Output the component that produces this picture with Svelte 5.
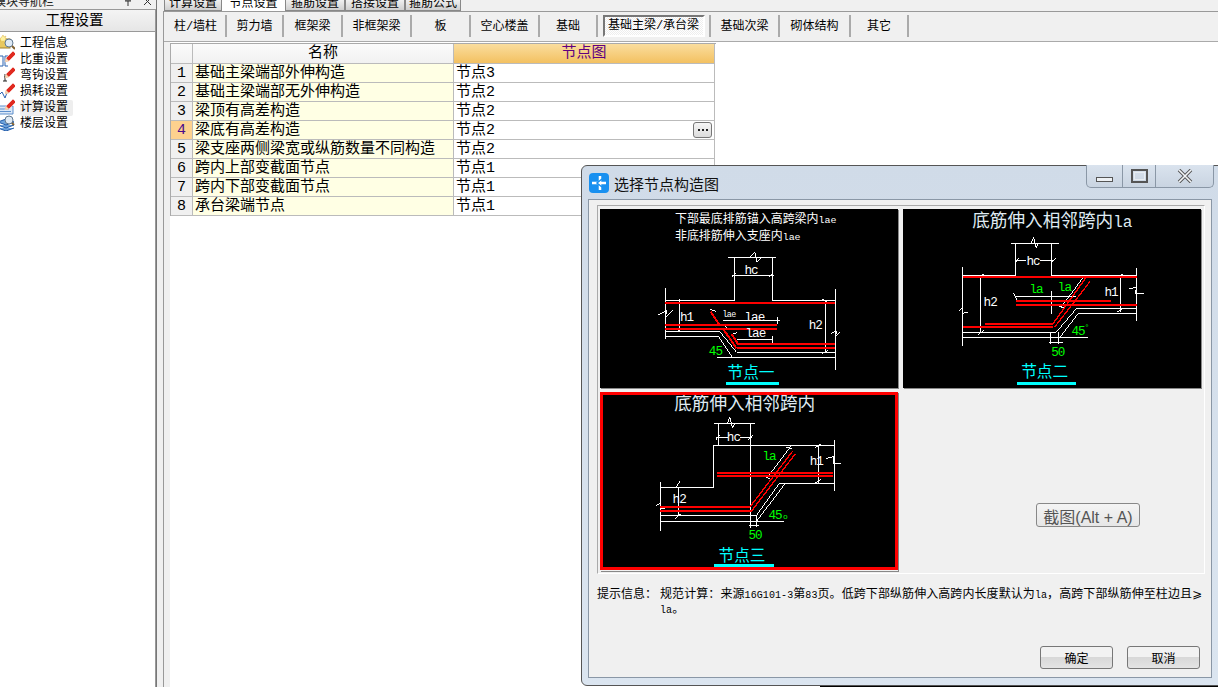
<script lang="ts">
    const topTabs = [
        { label: "计算设置", w: 58 },
        { label: "节点设置", w: 63, active: true },
        { label: "箍筋设置", w: 60 },
        { label: "搭接设置", w: 60 },
        { label: "箍筋公式", w: 56 },
    ];
    const tools = [
        { label: "柱/墙柱", w: 61 },
        { label: "剪力墙", w: 57 },
        { label: "框架梁", w: 59 },
        { label: "非框架梁", w: 69 },
        { label: "板", w: 59 },
        { label: "空心楼盖", w: 69 },
        { label: "基础", w: 58 },
        { label: "基础主梁/承台梁", w: 113, active: true },
        { label: "基础次梁", w: 69 },
        { label: "砌体结构", w: 71 },
        { label: "其它", w: 58 },
    ];
    const navItems = [
        { label: "工程信息", icon: "info" },
        { label: "比重设置", icon: "weight" },
        { label: "弯钩设置", icon: "hook" },
        { label: "损耗设置", icon: "loss" },
        { label: "计算设置", icon: "calc", selected: true },
        { label: "楼层设置", icon: "floor" },
    ];
    const rows = [
        { name: "基础主梁端部外伸构造", value: "节点3" },
        { name: "基础主梁端部无外伸构造", value: "节点2" },
        { name: "梁顶有高差构造", value: "节点2" },
        { name: "梁底有高差构造", value: "节点2", current: true },
        { name: "梁支座两侧梁宽或纵筋数量不同构造", value: "节点2" },
        { name: "跨内上部变截面节点", value: "节点1" },
        { name: "跨内下部变截面节点", value: "节点1" },
        { name: "承台梁端节点", value: "节点1" },
    ];
</script>

<div class="page">
    <aside class="sidebar">
        <div class="nav-caption">
            <span>模块导航栏</span>
            <span class="caption-btns">
                <svg width="10" height="9" viewBox="0 0 10 9"><path d="M5 0v8M2 3h6M3 0v3M7 0v3" stroke="#333" fill="none" /></svg>
                <svg width="9" height="9" viewBox="0 0 9 9"><path d="M1 0l7 7M8 0l-7 7" stroke="#333" fill="none" /></svg>
            </span>
        </div>
        <div class="nav-title">工程设置</div>
        <ul class="nav-list">
            {#each navItems as item}
                <li>
                    <svg class="nav-icon" width="16" height="16" viewBox="0 0 16 16">
                        {#if item.icon === "info"}
                            <rect x="-1" y="4" width="12" height="9" fill="#e8c860" stroke="#a08030" />
                            <path d="M4 0l1 2 2-1-1 2 2 1-2 1 0 2-2-1-2 1 0-2-2-1 2-1z" fill="#fff2a0" stroke="#d8b040" stroke-width=".5" />
                            <circle cx="10" cy="8" r="4" fill="#dfeaf5" stroke="#607890" />
                            <path d="M13 11l3 3" stroke="#806030" stroke-width="2" />
                        {:else if item.icon === "floor"}
                            <path d="M-1 7l8-3 8 3-8 3zM-1 10l8 3 8-3M-1 13l8 3 8-3" fill="#6fa4dc" stroke="#1f5aa8" />
                            <circle cx="10" cy="5" r="4" fill="#dfeaf5" stroke="#607890" />
                            <path d="M13 8l2 2" stroke="#806030" stroke-width="2" />
                        {:else}
                            {#if item.icon === "weight"}
                                <path d="M0 5h4v10H0M9 5H6v10h3" fill="none" stroke="#2a62b0" />
                            {:else if item.icon === "hook"}
                                <path d="M6 7v7M4 14h4M5 10h2" fill="none" stroke="#222" />
                            {:else if item.icon === "loss"}
                                <path d="M0 12l3-3 3 6 3-8" fill="none" stroke="#2a62b0" />
                            {:else}
                                <path d="M-1 7h15v8H-1z" fill="#dbe8f7" stroke="#5d8fcc" />
                                <path d="M1 10h9M1 12.500h11" stroke="#5d8fcc" />
                            {/if}
                            <path d="M6 11l1-4 7-7 3 3-7 7z" fill="#e02a20" stroke="#fff" stroke-width=".5" />
                            <path d="M6 11l1-4 3 3z" fill="#f0d8b0" />
                        {/if}
                    </svg>
                    <span class="nav-label" class:selected={item.selected}>{item.label}</span>
                </li>
            {/each}
        </ul>
    </aside>

    <main class="main">
        <nav class="top-tabs">
            {#each topTabs as tab}
                <span class="top-tab" class:active={tab.active} style="width:{tab.w}px">{tab.label}</span>
            {/each}
        </nav>
        <div class="sheet">
            <div class="toolbar">
                {#each tools as tool}
                    <div class="tool" style="width:{tool.w}px">
                        <span class="tool-text" class:active={tool.active}>{tool.label}</span>
                    </div>
                {/each}
            </div>
            <div class="table-wrap">
                <div class="table">
                    <div class="cell head corner"></div>
                    <div class="cell head">名称</div>
                    <div class="cell head picked">节点图</div>
                    {#each rows as row, i}
                        <div class="cell num" class:current={row.current}>{i + 1}</div>
                        <div class="cell name">{row.name}</div>
                        <div class="cell value">
                            {row.value}
                            {#if row.current}
                                <button class="more">
                                    <svg width="10" height="3" viewBox="0 0 10 3"><path d="M0 0h2v2H0zM4 0h2v2H4zM8 0h2v2H8z" fill="#222" /></svg>
                                </button>
                            {/if}
                        </div>
                    {/each}
                </div>
            </div>
        </div>
    </main>

    <section class="dialog">
        <header class="dlg-title">
            <span class="dlg-logo">
                <svg width="20" height="20" viewBox="0 0 20 20">
                    <rect width="20" height="20" rx="4" fill="#1890f0" />
                    <path d="M3 10h14M11 3v14" stroke="#fff" stroke-width="2.500" fill="none" />
                    <path d="M13 6l-5 4 5 4" stroke="#1890f0" stroke-width="1.500" fill="none" />
                </svg>
            </span>
            <span class="dlg-name">选择节点构造图</span>
            <div class="win-btns">
                <span class="win-btn min"><i></i></span>
                <span class="win-btn max"><i></i></span>
                <span class="win-btn close">
                    <svg width="16" height="14" viewBox="0 0 16 14"><path d="M2 1l12 12M14 1L2 13" stroke="#555" stroke-width="3.500" /><path d="M2 1l12 12M14 1L2 13" stroke="#f4f6f8" stroke-width="1.600" /></svg>
                </span>
            </div>
        </header>
        <div class="dlg-body">
            <div class="gallery">
                <div class="drawing">
                    <svg width="298" height="179" viewBox="60 145 895 537" class="cad">
                        <rect x="60" y="145" width="895" height="537" fill="#000" />
                        <text x="285" y="188" class="note">下部最底排筋锚入高跨梁内<tspan class="mono">lae</tspan></text>
                        <text x="285" y="238" class="note">非底排筋伸入支座内<tspan class="mono">lae</tspan></text>
                        <path class="w" d="M445 289H590M510 289L525 275L532 305L545 289M463 289V421M577 289V421M256 421H463M577 421H765M256 381V535M766 385V628M456 343H582M456 350L470 336M568 350L582 336M299 415V515M288 515L304 503M737 421V578M727 415L745 427M727 578L745 570" />
                        <path class="w" d="M235 462L260 450L256 470L278 450M755 518L770 510L768 528L780 515M430 481H600M470 537H580M594 470V490M578 527V548M256 513H420L470 575H765M256 527H415L458 590M411 590H765M390 446L408 452M428 490L440 500M455 522L470 516" />
                        <path class="r t" d="M256 427H765M256 494H593M256 504H593M475 551H765M470 563H765" />
                        <path class="r" d="M392 453L418 492M430 505L470 563M455 520L475 551" stroke-width="6" />
                        <text x="300" y="480" class="lbl">h1</text>
                        <text x="687" y="505" class="lbl">h2</text>
                        <text x="494" y="339" class="lbl">hc</text>
                        <text x="428" y="468" class="lbl n">lae</text>
                        <text x="494" y="480" class="lbl">lae</text>
                        <text x="497" y="530" class="lbl">lae</text>
                        <text x="387" y="582" class="lbl g">45</text>
                        <text x="443" y="652" class="cap">节点一</text>
                        <rect x="438" y="663" width="159" height="9" fill="#00ffff" />
                    </svg>
                </div>
                <div class="drawing">
                    <svg width="298" height="179" viewBox="10 145 895 537" class="cad">
                        <rect x="10" y="145" width="895" height="537" fill="#000" />
                        <text x="218" y="200" class="big">底筋伸入相邻跨内<tspan class="mono">la</tspan></text>
                        <path class="w" d="M333 247H480M395 247L402 230L410 262L417 247M349 247V343M455 247V343M190 343H349M455 343H712M190 320V556M712 322V482M345 300H380M422 300H465M345 308L358 292M455 308L468 292M244 343V515M234 352L252 340M234 522L252 510M662 343V455M652 352L670 340M652 455L670 443" />
                        <path class="w" d="M455 390V460M190 515H470L530 445H712M190 532H565M480 532L535 460H712M345 408H530M342 398L352 418M555 345L485 440M478 436L498 444M545 345L562 352M453 515V550M478 515V550M448 545H490M690 385L712 378L708 397L735 400M178 450L190 442L190 458L204 455" />
                        <path class="r t" d="M190 350H712M348 422H635M348 434H712M190 500H460M256 490H460" />
                        <path class="r" d="M460 490L560 350M465 500L572 362" stroke-width="4" />
                        <text x="381" y="314" class="lbl">hc</text>
                        <text x="252" y="435" class="lbl">h2</text>
                        <text x="615" y="407" class="lbl">h1</text>
                        <text x="390" y="398" class="lbl g">la</text>
                        <text x="475" y="390" class="lbl g">la</text>
                        <text x="516" y="523" class="lbl g">45</text>
                        <text x="555" y="508" class="lbl g sm">°</text>
                        <text x="455" y="586" class="lbl g">50</text>
                        <text x="365" y="650" class="cap">节点二</text>
                        <rect x="351" y="663" width="180" height="9" fill="#00ffff" />
                    </svg>
                </div>
                <div class="drawing">
                    <svg width="298" height="178" viewBox="12 12 895 534" class="cad">
                        <rect x="12" y="12" width="895" height="534" fill="#000" />
                        <text x="235" y="65" class="big">底筋伸入相邻跨内</text>
                        <path class="w" d="M355 105H477M395 105L402 88L410 120L417 105M367 105V172M463 105V420M352 172H715M352 172V300H193M193 282V430M715 155V310M360 147H395M432 147H470M360 155L372 140M458 155L472 140M667 172V285M657 180L675 168M657 285L675 275M247 300V385M240 298L254 278M238 392L254 378" />
                        <path class="w" d="M193 382H482L550 287H715M193 400H565M482 400L568 287H715M515 268L585 175M505 264L522 272M572 178L590 182M460 412H490M463 400V418M482 382V418M690 212L715 205L712 225L736 226M180 352L193 347L193 360L207 362" />
                        <path class="r t" d="M363 254H712M363 264H712M193 356H463M193 368H468" />
                        <path class="r" d="M463 356L590 190M468 368L598 198" stroke-width="4" />
                        <text x="393" y="160" class="lbl">hc</text>
                        <text x="230" y="345" class="lbl">h2</text>
                        <text x="642" y="230" class="lbl">h1</text>
                        <text x="500" y="216" class="lbl g">la</text>
                        <text x="518" y="393" class="lbl g">45</text>
                        <text x="562" y="393" class="lbl g sm">o</text>
                        <text x="458" y="452" class="lbl g">50</text>
                        <text x="368" y="518" class="cap">节点三</text>
                        <rect x="354" y="528" width="180" height="9" fill="#00ffff" />
                        <rect x="16.500" y="16.500" width="886" height="525" fill="none" stroke="#ff0000" stroke-width="9" />
                    </svg>
                </div>
                <div class="shot-cell">
                    <button class="shot-btn">截图(Alt + A)</button>
                </div>
            </div>
            <div class="hint">
                <span class="hint-label">提示信息：</span>
                <p>规范计算：来源<span class="lat">16G101-3</span>第<span class="lat">83</span>页。低跨下部纵筋伸入高跨内长度默认为<span class="lat">la</span>，高跨下部纵筋伸至柱边且<span class="ge">⩾</span><br /><span class="lat">la</span>。</p>
            </div>
            <div class="actions">
                <button class="dlg-btn">确定</button>
                <button class="dlg-btn">取消</button>
            </div>
        </div>
    </section>
    <div class="behind"></div>
</div>

<style>
    :global(body) {
        margin: 0;
        background: #fff;
    }

    .page {
        position: relative;
        width: 1218px;
        height: 687px;
        overflow: hidden;
        display: flex;
        font-family: "Liberation Mono", "Noto Sans CJK SC", monospace;
        font-size: 12px;
        color: #000;
        background: #f0f0f0;
    }

    .sidebar {
        width: 156px;
        display: flex;
        flex-direction: column;
        border-right: 1px solid #777;
        flex-shrink: 0;
    }

    .nav-caption {
        height: 9px;
        line-height: 7px;
        margin-left: -6px;
        display: flex;
        justify-content: space-between;
        color: #222;
        overflow: hidden;
    }

    .caption-btns {
        display: flex;
        gap: 10px;
        padding-right: 4px;
        margin-top: -2px;
    }

    .nav-title {
        height: 21px;
        line-height: 23px;
        padding-right: 6px;
        text-align: center;
        font-size: 14.500px;
        border: 1px solid #999;
        border-left: none;
        background: linear-gradient(#f4f4f4, #e6e6e6);
    }

    .nav-list {
        flex: 1;
        margin: 0;
        padding: 4px 0 0;
        list-style: none;
        background: #fff;
        border-right: 1px solid #999;
    }

    .nav-list li {
        height: 16px;
        display: flex;
        align-items: center;
    }

    .nav-icon {
        margin: -3px 5px 0 -1px;
        flex-shrink: 0;
        overflow: hidden;
    }

    .nav-label {
        line-height: 16px;
        padding-right: 5px;
        border-radius: 2px;
    }

    .nav-label.selected {
        background: #eeeeee;
    }

    .main {
        flex: 1;
        margin-left: 6px;
        display: flex;
        flex-direction: column;
        min-width: 0;
    }

    .top-tabs {
        height: 11px;
        display: flex;
        padding-left: 1px;
    }

    .top-tab {
        box-sizing: border-box;
        height: 11px;
        line-height: 8px;
        text-align: center;
        overflow: hidden;
        background: linear-gradient(#f0f0f0, #cfcfcf);
        border: 1px solid #888;
        border-top: none;
    }

    .top-tab.active {
        background: #fff;
        border: none;
    }

    .sheet {
        flex: 1;
        display: flex;
        flex-direction: column;
        border-top: 1px solid #999;
        border-left: 1px solid #999;
        min-height: 0;
    }

    .toolbar {
        height: 30px;
        padding-left: 2px;
        display: flex;
        border-bottom: 1px solid #aaa;
        box-sizing: border-box;
        background: #f0f0f0;
    }

    .tool {
        box-sizing: border-box;
        height: 22px;
        margin-top: 3px;
        padding-bottom: 2px;
        display: flex;
        align-items: center;
        justify-content: center;
        border-right: 2px solid #aaa;
    }

    .tool-text.active {
        box-sizing: border-box;
        width: 102px;
        height: 22px;
        margin-bottom: -2px;
        line-height: 18px;
        text-align: center;
        border: 2px solid;
        border-color: #777 #fff #fff #777;
        background: repeating-conic-gradient(#fff 0 25%, #eee 0 50%) 0 0 / 2px 2px;
    }

    .table-wrap {
        flex: 1;
        padding-top: 1px;
        background: linear-gradient(90deg, #f0f0f0 6px, #fff 6px);
        padding-left: 6px;
    }

    .table {
        width: 545px;
        display: grid;
        grid-template-columns: 22px 261px 261px;
        grid-template-rows: 20px repeat(8, 19px);
        border-left: 1px solid #aaa;
        border-top: 1px solid #aaa;
        background: #fff;
        font-size: 15px;
        box-sizing: content-box;
    }

    .cell {
        box-sizing: border-box;
        position: relative;
        line-height: 20px;
        padding-left: 2px;
        border-right: 1px solid #bbb;
        border-bottom: 1px solid #bbb;
        white-space: nowrap;
    }

    .head {
        text-align: center;
        background: linear-gradient(#fbfbfb, #f1f1f1);
        padding-left: 0;
        line-height: 20px;
    }

    .head.picked {
        color: #600080;
        background: linear-gradient(#fadd9e, #f3c161);
    }

    .num {
        text-align: center;
        padding-left: 0;
        background: #f0f0f0;
    }

    .num.current {
        background: #fdd18e;
        color: #4a0a8a;
    }

    .name {
        background: #ffffe4;
    }

    .value {
        padding-left: 2px;
    }

    .more {
        position: absolute;
        right: 2px;
        top: 1px;
        width: 19px;
        height: 16px;
        padding: 0;
        display: flex;
        align-items: center;
        justify-content: center;
        border: 1px solid #777;
        border-radius: 3px;
        background: linear-gradient(#f6f6f6, #dcdcdc);
    }

    .dialog {
        position: absolute;
        left: 581px;
        top: 165px;
        width: 645px;
        height: 521px;
        box-sizing: border-box;
        display: flex;
        flex-direction: column;
        padding: 0 13px 7px 6px;
        background: linear-gradient(#d0dbe8, #dbe5f0);
        border: 1px solid #555;
        border-radius: 6px 0 0 6px;
    }

    .dlg-title {
        height: 33px;
        flex-shrink: 0;
        display: flex;
        align-items: center;
        position: relative;
    }

    .dlg-logo {
        display: flex;
        margin: 0 5px 0 1px;
    }

    .dlg-name {
        font-size: 15px;
        color: #111;
        margin-top: 2px;
    }

    .win-btns {
        position: absolute;
        left: 498px;
        top: -1px;
        width: 128px;
        height: 23px;
        display: flex;
        box-sizing: border-box;
        border: 1px solid #8a97a6;
        border-top: none;
        border-radius: 0 0 5px 5px;
        background: linear-gradient(#dae3ee, #c9d4e1);
    }

    .win-btn {
        display: flex;
        align-items: center;
        justify-content: center;
        border-right: 1px solid #8a97a6;
    }

    .win-btn.min {
        width: 35px;
    }

    .win-btn.min i {
        width: 15px;
        height: 3px;
        margin-top: 6px;
        background: #eef1f4;
        border: 1px solid #555;
    }

    .win-btn.max {
        width: 32px;
    }

    .win-btn.max i {
        box-sizing: border-box;
        width: 17px;
        height: 14px;
        border: 2px solid #555;
        outline: 1px solid #e8edf2;
        outline-offset: -4px;
    }

    .win-btn.close {
        flex: 1;
        border-right: none;
    }

    .dlg-body {
        flex: 1;
        display: flex;
        flex-direction: column;
        padding: 5px 8px 0;
        background: #f0f0f0;
        border: 1px solid #8a97a6;
        min-height: 0;
    }

    .gallery {
        box-sizing: border-box;
        width: 608px;
        height: 369px;
        padding: 3px 2px 0;
        display: grid;
        grid-template-columns: 298px 298px;
        grid-template-rows: 179px 179px;
        column-gap: 5px;
        row-gap: 4px;
        border: 1px solid #fff;
        border-top-color: #aaa;
        border-left-color: #aaa;
    }

    .drawing {
        height: 179px;
        box-shadow: 1px 1px 0 #888;
    }

    .cad {
        display: block;
        shape-rendering: crispEdges;
    }

    .w {
        fill: none;
        stroke: #fff;
        stroke-width: 3;
    }

    .r {
        fill: none;
        stroke: #ff0000;
    }

    .r.t {
        stroke-width: 6;
    }

    .note {
        fill: #fff;
        font-size: 36px;
    }

    .big {
        fill: #dfeaf2;
        font-size: 53px;
    }

    .mono {
        font-family: "Liberation Mono", monospace;
        font-size: 30px;
    }

    .big .mono {
        font-size: 48px;
    }

    .lbl {
        fill: #fff;
        font-family: "Liberation Mono", monospace;
        font-size: 38px;
        letter-spacing: -3px;
    }

    .lbl.n {
        font-size: 25px;
        letter-spacing: -2px;
    }

    .lbl.g {
        fill: #00ff00;
    }

    .lbl.sm {
        font-size: 24px;
    }

    .cap {
        fill: #00ffff;
        font-size: 47px;
    }

    .shot-cell {
        box-sizing: border-box;
        display: flex;
        align-items: center;
        justify-content: center;
        height: 179px;
        padding: 66px 0 0 72px;
    }

    .shot-btn {
        width: 104px;
        height: 24px;
        padding: 0;
        font-family: "Liberation Sans", "Noto Sans CJK SC", sans-serif;
        font-size: 16px;
        color: #555;
        border: 1px solid #888;
        border-radius: 3px;
        background: linear-gradient(#f4f4f4, #e6e6e6);
    }

    .hint {
        display: flex;
        margin-top: 14px;
        line-height: 15px;
    }

    .hint-label {
        width: 63px;
        flex-shrink: 0;
    }

    .hint p {
        margin: 0;
        white-space: nowrap;
        letter-spacing: 0.08px;
    }

    .lat {
        font-size: 10px;
    }

    .ge {
        font-family: "Noto Sans CJK SC", "DejaVu Sans", sans-serif;
        line-height: 0;
    }

    .actions {
        flex: 1;
        display: flex;
        justify-content: flex-end;
        gap: 14px;
        padding: 28px 3px 0 0;
    }

    .dlg-btn {
        width: 73px;
        height: 23px;
        padding: 0;
        font-family: "Liberation Mono", "Noto Sans CJK SC", monospace;
        font-size: 12px;
        color: #000;
        border: 1px solid #777;
        border-radius: 3px;
        background: linear-gradient(#f2f2f2 50%, #d8d8d8 50%, #e4e4e4);
    }

    .behind {
        position: absolute;
        left: 820px;
        right: 0;
        bottom: 0;
        height: 1px;
        background: #000;
    }
</style>
